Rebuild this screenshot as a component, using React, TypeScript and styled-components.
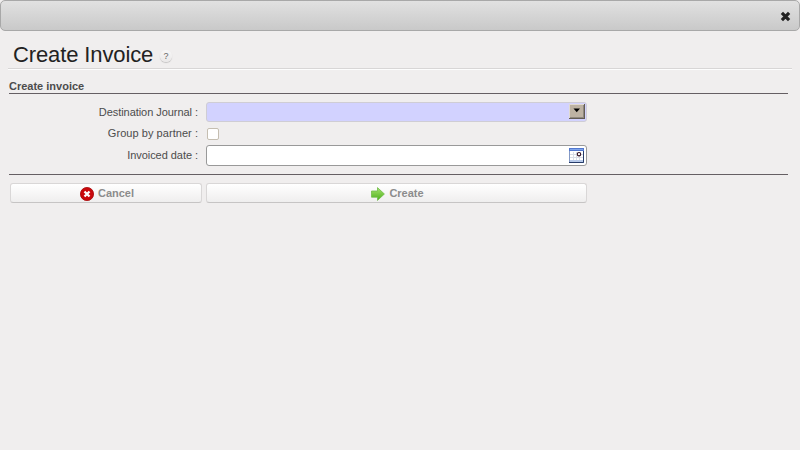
import React from "react";
import styled, { createGlobalStyle } from "styled-components";

const GlobalStyle = createGlobalStyle`
  * { box-sizing: border-box; }
  html, body { margin: 0; background: #f0eeee; }
  body { font: 11px "Liberation Sans", Arial, sans-serif; color: #4c4c4c; }
`;

const Dialog = styled.div`
  height: 450px;
  overflow: hidden;
  background: #f0eeee;
`;

const TitleBar = styled.header`
  display: flex;
  align-items: center;
  justify-content: flex-end;
  height: 31px;
  padding: 2px 8px 0 0;
  border: 1px solid #a8a8a8;
  border-radius: 5px;
  background: linear-gradient(#e1e1e1, #c9c9c9);
`;

const CloseButton = styled.button`
  display: flex;
  padding: 0;
  border: 0;
  background: none;
`;

const Heading = styled.div`
  display: flex;
  height: 39px;
  margin: 0 8px;
  padding-left: 5px;
  border-bottom: 1px solid #fdfdfd;
  box-shadow: inset 0 -1px #d8d6d6;
`;

const Title = styled.h1`
  width: 147px;
  margin: 11px 0 0;
  font-size: 22px;
  line-height: 26px;
  font-weight: normal;
  letter-spacing: -0.12px;
  color: #222;
  white-space: nowrap;
`;

const Help = styled.span`
  width: 12px;
  height: 12px;
  margin-top: 19px;
  border-radius: 50%;
  background: linear-gradient(#f8f7f7, #eae8e8);
  box-shadow: 0 1px 1px #c4c2c2;
  color: #666;
  font-size: 9px;
  line-height: 13px;
  text-align: center;
`;

const Form = styled.main`
  margin: 0 12px 0 9px;
`;

const SectionTitle = styled.h2`
  height: 24px;
  margin: 0;
  padding-top: 10px;
  border-bottom: 1px solid #655f63;
  font-size: 11px;
  line-height: 13px;
`;

const Fields = styled.div`
  display: grid;
  grid-template-columns: 189px 381px;
  grid-template-rows: 20px 13px 21px;
  column-gap: 8px;
  row-gap: 5px;
  align-items: center;
  height: 81px;
  padding-top: 8px;
  border-bottom: 1px solid #655f63;
`;

const Label = styled.label<{ $spacing?: number }>`
  text-align: right;
  line-height: 13px;
  letter-spacing: ${(p) => p.$spacing ?? 0}px;
  white-space: nowrap;
`;

const Field = styled.div<{ $required?: boolean }>`
  display: flex;
  justify-content: flex-end;
  align-items: center;
  height: 100%;
  padding-right: ${(p) => (p.$required ? 1 : 2)}px;
  padding-bottom: ${(p) => (p.$required ? 1 : 0)}px;
  border: 1px solid ${(p) => (p.$required ? "#cfcdd4" : "#999")};
  border-radius: 3px;
  background: ${(p) => (p.$required ? "#d2d2ff" : "#fff")};
`;

const Checkbox = styled.span`
  align-self: end;
  width: 12px;
  height: 12px;
  margin-left: 1px;
  border: 1px solid #c5beb1;
  border-radius: 2px;
  background: #fff;
`;

const Actions = styled.div`
  display: grid;
  grid-template-columns: 192px 381px;
  column-gap: 4px;
  padding: 8px 0 0 1px;
`;

const ActionButton = styled.button`
  display: flex;
  align-items: center;
  justify-content: center;
  gap: 4px;
  height: 20px;
  padding: 1px 0 0 2px;
  border: 1px solid #d9d7d7;
  border-bottom-color: #c6c4c4;
  border-radius: 3px;
  background: linear-gradient(#fff, #efeeee);
  color: #8c8c8c;
  font: bold 11px/13px "Liberation Sans", Arial, sans-serif;
`;

const ActionText = styled.span`
  margin-top: -1px;
`;

const CloseIcon = () => (
  <svg width="11" height="11" viewBox="0 0 11 11">
    <path d="M1.9 1.9l7.2 7.2M9.1 1.9L1.9 9.1" stroke="#222" strokeWidth="3.2" />
  </svg>
);

const DropdownIcon = () => (
  <svg width="16" height="15" viewBox="0 0 16 15">
    <path d="M0 0h16v15H0z" fill="#625b53" />
    <path d="M0 0h15v14H0z" fill="#e0dad2" />
    <path d="M1 1h14v13H1z" fill="#8f887e" />
    <path d="M1 1h13v12H1z" fill="#bdb2a3" />
    <path d="M4.5 4.5h6.5L7.75 8.3z" fill="#000" />
  </svg>
);

const CalendarIcon = () => (
  <svg width="15" height="15" viewBox="0 0 15 15">
    <path d="M0 0h15v15H0z" fill="#8499c5" />
    <path d="M0 0h15v3H0z" fill="#5278cf" />
    <path d="M1 1h13v1H1z" fill="#7fa4eb" />
    <path d="M1 3h13v10H1z" fill="#fff" />
    <path d="M4.5 4v9M7.5 4v9M10.5 4v9M1 6.5h13M1 9.5h13" stroke="#d8dde6" />
    <path d="M1 12h13v2H1z" fill="#b7c9e9" />
    <path d="M14.5 3v11.5H0" fill="none" stroke="#273c69" />
    <circle cx="10" cy="6.2" r="1.7" fill="#fff" stroke="#351426" strokeWidth="1.1" />
  </svg>
);

const CancelIcon = () => (
  <svg width="14" height="14" viewBox="0 0 14 14">
    <circle cx="7" cy="7" r="6.6" fill="#c9080c" stroke="#a80709" strokeWidth=".8" />
    <path d="M4.5 4.5l5 5M9.5 4.5l-5 5" stroke="#fff" strokeWidth="2.3" />
  </svg>
);

const ArrowIcon = () => (
  <svg width="14" height="14" viewBox="0 0 14 14">
    <defs>
      <linearGradient id="arrow" x2="0" y2="1">
        <stop stopColor="#a6e36f" />
        <stop offset="1" stopColor="#4caf19" />
      </linearGradient>
    </defs>
    <path d="M.5 4h6V.6L13.4 7l-6.9 6.4V10.2h-6z" fill="url(#arrow)" stroke="#70bd49" strokeWidth=".8" />
  </svg>
);

export default function App() {
  return (
    <>
      <GlobalStyle />
      <Dialog>
        <TitleBar>
          <CloseButton aria-label="Close"><CloseIcon /></CloseButton>
        </TitleBar>
        <Heading>
          <Title>Create Invoice</Title>
          <Help>?</Help>
        </Heading>
        <Form>
          <SectionTitle>Create invoice</SectionTitle>
          <Fields>
            <Label $spacing={-0.05}>Destination Journal :</Label>
            <Field $required><DropdownIcon /></Field>
            <Label $spacing={0.05}>Group by partner :</Label>
            <Checkbox />
            <Label $spacing={-0.05}>Invoiced date :</Label>
            <Field><CalendarIcon /></Field>
          </Fields>
          <Actions>
            <ActionButton><CancelIcon /><ActionText>Cancel</ActionText></ActionButton>
            <ActionButton><ArrowIcon /><ActionText>Create</ActionText></ActionButton>
          </Actions>
        </Form>
      </Dialog>
    </>
  );
}
